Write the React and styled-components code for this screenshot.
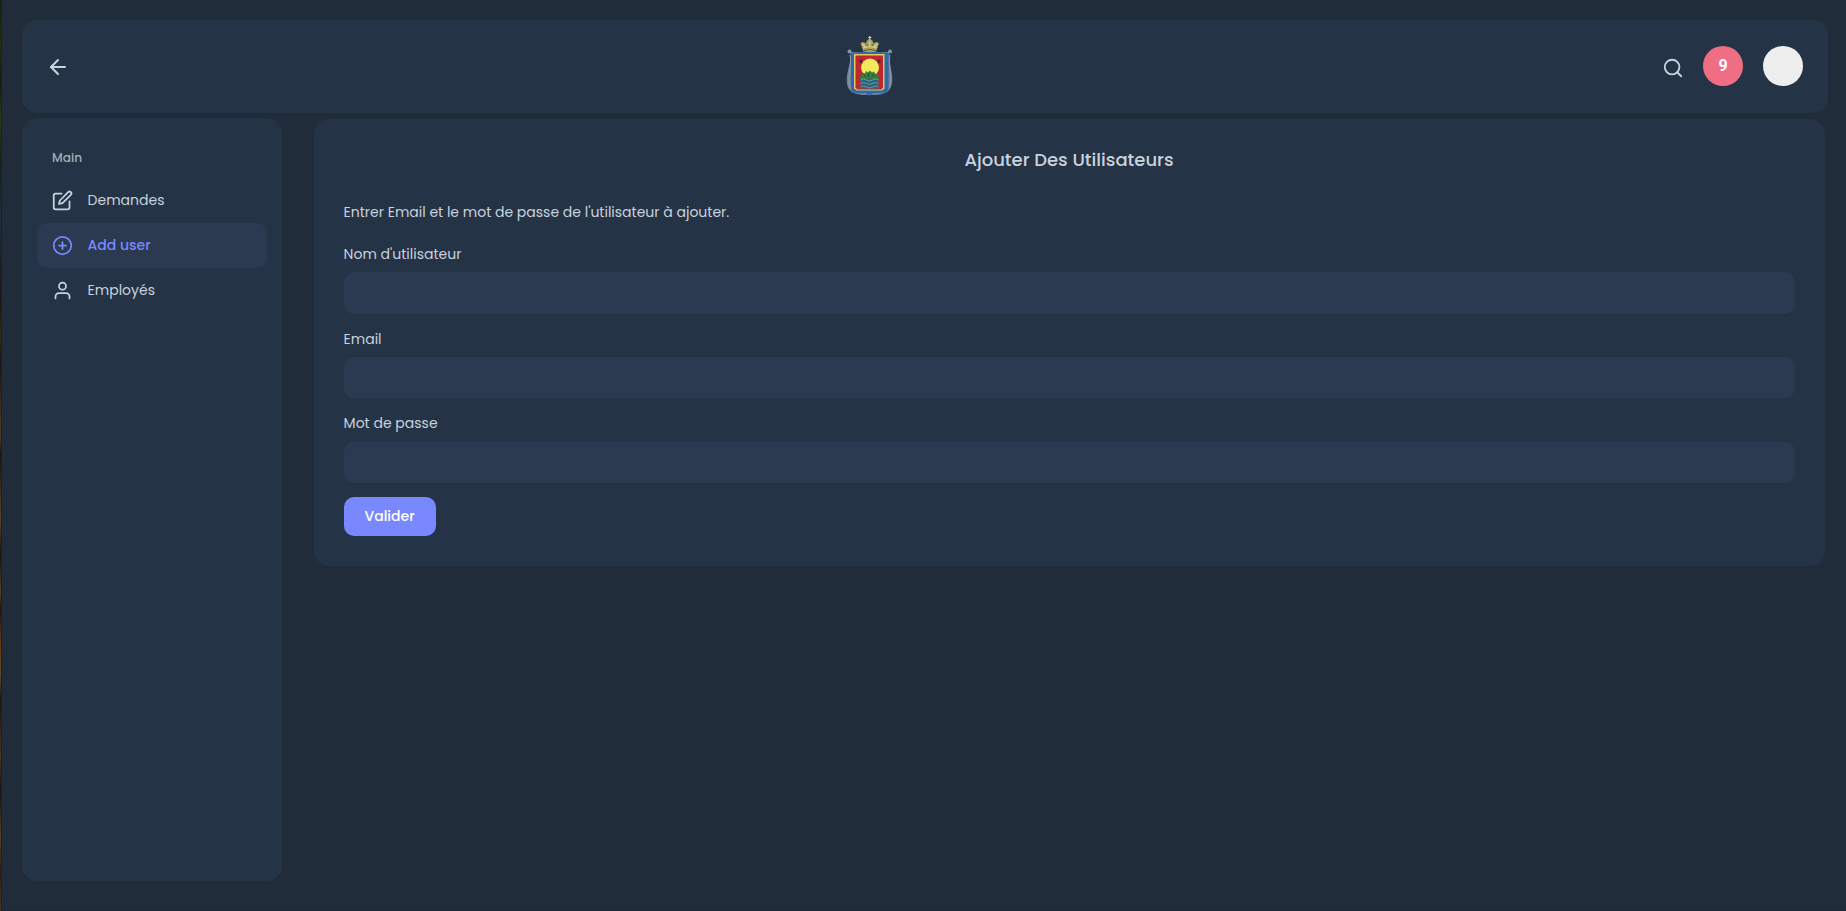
import React from "react";
import styled, { createGlobalStyle, css } from "styled-components";
import { FiArrowLeft, FiEdit, FiPlusCircle, FiUser, FiSearch } from "react-icons/fi";

const GlobalStyle = createGlobalStyle`
  *, *::before, *::after { box-sizing: border-box; }
  html, body { margin: 0; height: 100%; overflow: hidden; }
  body {
    background: #212c3b;
    color: #c8d2de;
    font-family: Poppins, Inter, sans-serif;
    font-size: 14px;
    line-height: 20px;
  }
`;

const Screen = styled.div`
  height: 911px;
  display: flex;
  border-bottom: 1px solid #1c2532;
`;

const Edge = styled.div`
  flex: none;
  width: 2px;
  border-right: 1px solid #1a2028;
  background: linear-gradient(
    #16200f 0, #26300f 5%, #151a14 9%, #2c3a12 13%, #17201c 18%, #1f3038 24%,
    #1a1512 33%, #2a3010 37%, #171513 40%, #43301c 45%, #4a3a22 48%, #16130f 50%,
    #5a4624 57%, #17130f 61%, #54431f 65%, #1d1712 67%, #6a3a14 71%, #5b4c2a 74%,
    #1b1510 77%, #4b3520 83%, #16130f 87%, #554120 92%, #2a1d14 96%, #4b3a1e 100%
  );
`;

const Page = styled.div`
  flex: 1;
  padding: 20px 18px 0 20px;
  display: flex;
  flex-direction: column;
`;

const Header = styled.header`
  flex: none;
  height: 93px;
  padding: 0 25px 1px 24px;
  border-radius: 15px;
  background: #253346;
  display: flex;
  justify-content: space-between;
  align-items: center;
`;

const IconButton = styled.button`
  padding: 2px 0 0;
  border: 0;
  background: none;
  color: inherit;
  display: flex;
`;

const Actions = styled.div`
  display: flex;
  align-items: center;
  gap: 20px;
`;

const SearchButton = styled(IconButton)`
  padding-top: 3px;
  margin-right: -0.5px;
`;

const Round = styled.div`
  width: 40px;
  height: 40px;
  border-radius: 50%;
  display: flex;
  align-items: center;
  justify-content: center;
  background: ${(p) => p.$fill};
  color: #fff;
  font-family: Roboto, sans-serif;
  font-weight: 700;
  font-size: 16px;
`;

const Body = styled.div`
  display: flex;
  align-items: flex-start;
  gap: 32px;
  padding: 5px 3px 0 0;
`;

const Sidebar = styled.aside`
  flex: none;
  width: 260px;
  height: 763px;
  padding: 30px 15px;
  border-radius: 15px;
  background: #253346;
`;

const SectionLabel = styled.div`
  padding-left: 15px;
  margin-bottom: 10px;
  font-size: 12.2px;
  font-weight: 500;
  color: #a3adba;
`;

const NavLabel = styled.span`
  padding-bottom: 2px;
`;

const NavItem = styled.a`
  display: flex;
  align-items: center;
  gap: 15px;
  height: 45px;
  padding-left: 14.6px;
  border-radius: 10px;
  ${(p) =>
    p.$active &&
    css`
      background: #2b3a51;
      color: #7a88ff;
      font-weight: 500;
    `}
`;

const Card = styled.form`
  flex: 1;
  height: 447px;
  margin-top: 1px;
  padding: 30px;
  border-radius: 15px;
  background: #253346;
  display: flex;
  flex-direction: column;
  text-indent: -0.4px;
`;

const Title = styled.h2`
  margin: 0;
  height: 22px;
  line-height: 22px;
  text-align: center;
  text-indent: -1px;
  font-size: 18px;
  font-weight: 500;
`;

const Intro = styled.p`
  margin: 31px 0 22px;
`;

const Field = styled.label`
  height: 84.6px;
  display: flex;
  flex-direction: column;
  gap: 8.4px;
`;

const Input = styled.input`
  width: 100%;
  height: 41.4px;
  padding: 0 15px;
  border: 0;
  border-radius: 10px;
  background: #2b3a51;
  color: inherit;
  font: inherit;
`;

const Submit = styled.button`
  align-self: flex-start;
  margin-top: -0.8px;
  width: 92px;
  height: 39px;
  padding: 0 1px 0.4px 0;
  border: 0;
  border-radius: 10px;
  background: #7a88ff;
  color: #fff;
  font: inherit;
  font-weight: 500;
`;

const CrestArt = styled.svg`
  margin-left: 8px;
`;

const Crest = () => (
  <CrestArt width="50" height="62" viewBox="0 -1 50 62">
    <path d="M5 16C8 24 0 37 2 48C3 56 10 58 17 59L32 59C41 58 46 55 47 47C49 37 42 24 44.500 16Z" fill="#6f7f96" />
    <path d="M5 19C7 27 3 37 4 48Q5 54 9 56M45 19C43 27 47 38 45.500 48Q44 53 41 55" stroke="#919eaf" fill="none" strokeWidth="1" />
    <circle cx="4.500" cy="15.500" r="2" fill="#8491a3" />
    <circle cx="45" cy="15.500" r="2" fill="#8491a3" />
    <path d="M6 17Q15 16 24 15Q34 16 43.500 17V53Q42 57 36 57H28L24.500 60L21 57H12Q7 57 6 53Z" fill="#2e69ad" />
    <path d="M9 18H39.500V52.500L37 54.500H11.500L9 52.500Z" fill="#d9cb62" />
    <path d="M10.500 19.500H38V51.500L36.500 53.500H12L10.500 51.500Z" fill="#c0262d" />
    <path d="M15.500 41H33.500V52.500H15.500Z" fill="#2c6480" />
    <circle cx="25" cy="31.500" r="9" fill="#f2ea5c" />
    <path d="M15 43V40L17 39L18 37L20 37.500L21 35L23 36.500L25 34.500L27 36.500L29 35.500L30 37.500L32 38L33 39.500L34 41V43Z" fill="#3a7a44" />
    <path d="M19 41L20 39M23 41L24 37M28 41L28 38M31 41V40" stroke="#24522f" strokeWidth="1" />
    <path d="M15.500 44Q18.500 42 21.500 44T27.500 44T33.500 44M15.500 47.500Q18.500 45.500 21.500 47.500T27.500 47.500T33.500 47.500M15.500 51Q18.500 49 21.500 51T27.500 51T33.500 51" fill="none" stroke="#6899a0" strokeWidth="1" />
    <path d="M16 22.500L16.700 24.300L18.600 24.400L17.100 25.600L17.600 27.500L16 26.400L14.400 27.500L14.900 25.600L13.400 24.400L15.300 24.300ZM34 22.500L34.700 24.300L36.600 24.400L35.100 25.600L35.600 27.500L34 26.400L32.400 27.500L32.900 25.600L31.400 24.400L33.300 24.300Z" fill="#4d2329" />
    <path d="M18.500 15.500L15.500 7.500Q17 5 19.500 6.500L21 7.500Q21.500 3.500 24.500 3Q28 3.500 28.500 7.500L30 6.500Q32.500 5 34 7.500L31 15.500Q25 17 18.500 15.500Z" fill="#aaa15e" />
    <path d="M18 12Q25 9.500 32 12M17.500 8L20 10.500M32 8L29.500 10.500M24.800 0V3.500M23.300 1.500H26.300M24.800 5V10" fill="none" stroke="#ddd694" strokeWidth="1.200" />
    <path d="M19 14.500Q25 12.500 30.500 14.500M21.500 8L22.500 10M28 8L27 10" fill="none" stroke="#5c5834" strokeWidth="1" />
  </CrestArt>
);

export default function App() {
  return (
    <>
      <GlobalStyle />
      <Screen>
        <Edge />
        <Page>
          <Header>
            <IconButton type="button" aria-label="Retour">
              <FiArrowLeft size={24} />
            </IconButton>
            <Crest />
            <Actions>
              <SearchButton type="button" aria-label="Rechercher">
                <FiSearch size={22} />
              </SearchButton>
              <Round $fill="#ef6e83">9</Round>
              <Round $fill="#eeeeee" />
            </Actions>
          </Header>
          <Body>
            <Sidebar>
              <SectionLabel>Main</SectionLabel>
              <NavItem>
                <FiEdit size={21} />
                <NavLabel>Demandes</NavLabel>
              </NavItem>
              <NavItem $active>
                <FiPlusCircle size={21} />
                <NavLabel>Add user</NavLabel>
              </NavItem>
              <NavItem>
                <FiUser size={21} />
                <NavLabel>Employés</NavLabel>
              </NavItem>
            </Sidebar>
            <Card>
              <Title>Ajouter Des Utilisateurs</Title>
              <Intro>Entrer Email et le mot de passe de l'utilisateur à ajouter.</Intro>
              <Field>Nom d'utilisateur<Input /></Field>
              <Field>Email<Input /></Field>
              <Field>Mot de passe<Input type="password" /></Field>
              <Submit type="button">Valider</Submit>
            </Card>
          </Body>
        </Page>
      </Screen>
    </>
  );
}
